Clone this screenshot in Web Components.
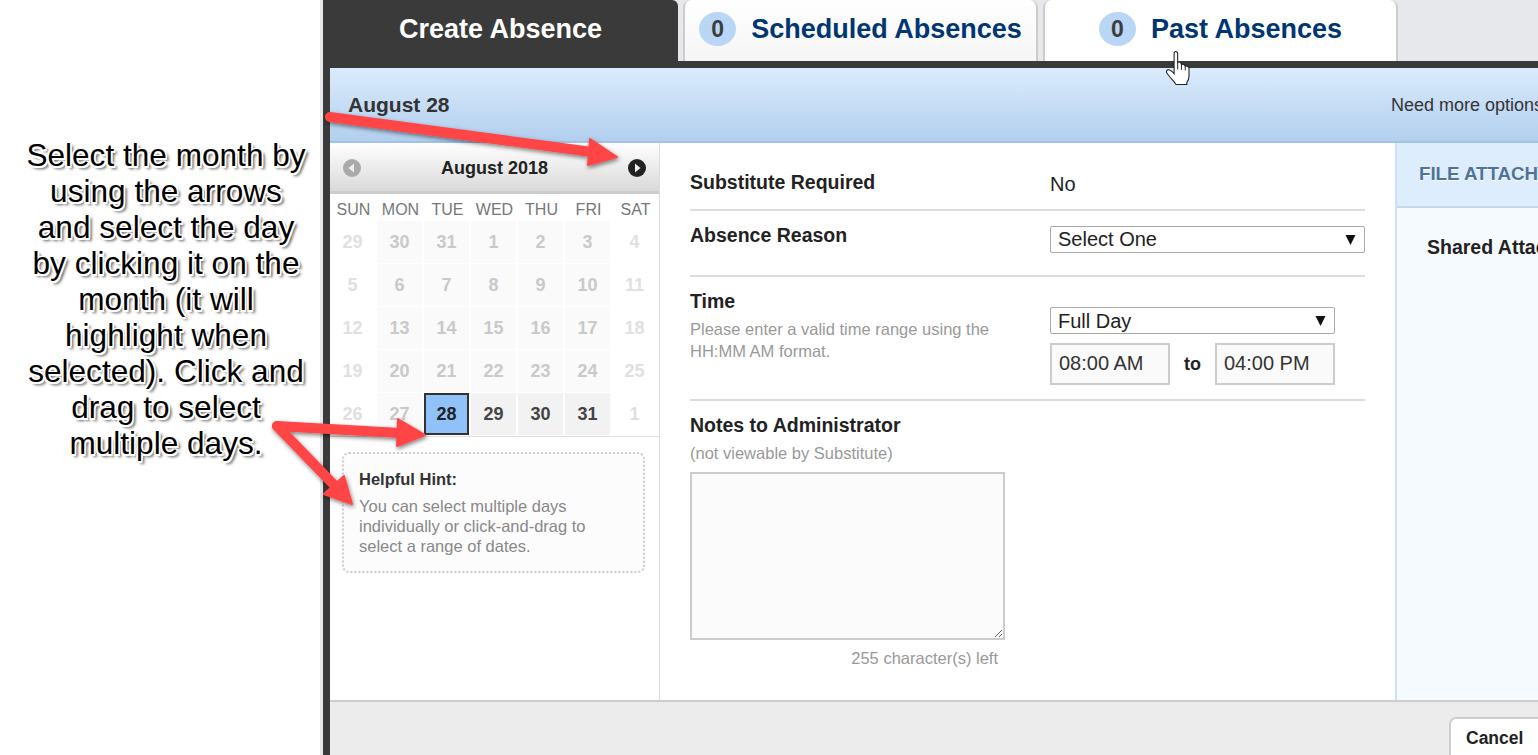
<!DOCTYPE html>
<html lang="en"><head><meta charset="utf-8"><title>Create Absence</title>
<style>
html,body{margin:0;padding:0;background:#fff;font-family:"Liberation Sans",Arial,sans-serif;}
</style></head><body>
<absence-page>
  <note-panel slot="note">Select the month by<br>using the arrows<br>and select the day<br>by clicking it on the<br>month (it will<br>highlight when<br>selected). Click and<br>drag to select<br>multiple days.</note-panel>
  <absence-tabs slot="tabs"></absence-tabs>
  <date-band slot="band"></date-band>
  <day-calendar slot="calendar"></day-calendar>
  <absence-form slot="form"></absence-form>
  <attach-panel slot="attach"></attach-panel>
  <action-bar slot="footer"></action-bar>
  <guide-arrows slot="overlay"></guide-arrows>
</absence-page>
<script>
function def(name, css, html, init){
  customElements.define(name, class extends HTMLElement{
    constructor(){super();const r=this.attachShadow({mode:'open'});r.innerHTML='<style>'+css+'</style>'+html;if(init)init(r,this);}
  });
}
def('absence-page',`
:host{display:flex;width:1538px;height:755px;overflow:hidden;position:relative;color:#222}
.left{flex:0 0 320px;height:100%}
.app{flex:1;min-width:0;display:flex;flex-direction:column;background:#e6e8ec;padding-left:3px}
.frame{flex:1;min-height:0;border-left:7px solid #3a3a3a;border-top:7px solid #3a3a3a;display:flex;flex-direction:column;background:#fff}
.body{flex:1;min-height:0;display:flex}
`,`<div class="left"><slot name="note"></slot></div>
<div class="app"><slot name="tabs"></slot>
<div class="frame"><slot name="band"></slot>
<div class="body"><slot name="calendar"></slot><slot name="form"></slot><slot name="attach"></slot></div>
<slot name="footer"></slot></div></div><slot name="overlay"></slot>`);

def('note-panel',`
:host{display:block;height:100%;box-sizing:border-box;padding-top:137px;padding-left:12px;width:320px;text-align:center;font-size:31.6px;line-height:36px;color:#000;white-space:nowrap;
text-shadow:1.5px 0 0 #fff,-1.5px 0 0 #fff,0 1.5px 0 #fff,0 -1.5px 0 #fff,1.5px 1.5px 0 #fff,-1.5px -1.5px 0 #fff,1.5px -1.5px 0 #fff,-1.5px 1.5px 0 #fff,3px 3px 3px rgba(0,0,0,.7)}
div{width:308px}
`,`<div><slot></slot></div>`);

def('tab-badge',`
:host{display:flex;align-items:center;justify-content:center;width:37px;height:34px;border-radius:50%;background:#b9d6f6;color:#3d3d3d;font-size:23px;font-weight:700}
`,`<slot></slot>`);

def('absence-tab',`
:host{display:flex;box-sizing:border-box;align-items:center;justify-content:center;gap:15px;height:61px;width:355px;font-size:27px;font-weight:700;color:#003672;background:linear-gradient(#fff,#f5f5f5);border:2px solid #ccc;border-bottom:0;border-top:0;border-top-left-radius:8px;border-top-right-radius:8px;padding-bottom:3px}
:host([active]){background:#3a3a3a;color:#fff;border:0;border-top-right-radius:6px;border-top-left-radius:0}
:host([current]){background:#fff}
`,`<slot></slot>`);

def('absence-tabs',`
:host{display:flex;height:61px;gap:5px;flex:none}
`,`<absence-tab active>Create Absence</absence-tab>
<absence-tab><tab-badge>0</tab-badge>Scheduled Absences</absence-tab>
<absence-tab current><tab-badge>0</tab-badge>Past Absences</absence-tab>`);

def('date-band',`
:host{display:flex;flex:none;box-sizing:border-box;height:75px;align-items:center;justify-content:space-between;background:linear-gradient(#dbebfd,#b2cfee);border-bottom:2px solid #a3c3e4;padding:2px 0 0 18px;color:#333}
b{font-size:21px;margin-bottom:2px}
span{width:147px;overflow:hidden;white-space:nowrap;font-size:18px}
`,`<b>August 28</b><span>Need more options?</span>`);

def('day-calendar',`
:host{display:block;flex:0 0 330px;box-sizing:border-box;border-right:1px solid #ddd;background:#fff}
.head{display:flex;align-items:center;justify-content:space-between;box-sizing:border-box;height:51px;padding:2px 12px 0 12px;border-bottom:3px solid #ccc;background:linear-gradient(#fff,#d9d9d9);font-size:18px;font-weight:700;color:#222}
svg{display:block}
.grid{display:grid;grid-template-columns:repeat(7,45px);column-gap:2px;grid-auto-rows:42px;row-gap:1px;padding-bottom:1px;border-bottom:1px solid #ddd}
.wd{display:flex;align-items:center;justify-content:center;box-sizing:border-box;height:27px;padding-top:4px;font-size:16px;color:#777}
.names{display:grid;grid-template-columns:repeat(7,47px);width:329px}
.d{display:flex;align-items:center;justify-content:center;font-size:18px;font-weight:700;box-sizing:border-box;color:#c9c9c9;background:#fafafa}
.we{background:#fff;color:#e0e0e0}
.cur{background:#f2f2f2;color:#444}
.sel{background:#90c1f9;color:#222;border:2px solid #333}
.hint{box-sizing:border-box;margin:15px 0 0 12px;width:303px;height:121px;border:2px dotted #ccc;border-radius:7px;background:#fcfcfc;padding:15px 15px;font-size:16.500px;line-height:20px;color:#888}
.hint b{display:block;color:#333;margin-bottom:7px}
`,`<div class="head">
<svg width="20" height="20" viewBox="0 0 20 20"><circle cx="10" cy="10" r="9" fill="#aaa"/><path d="M12 5.500v9L6.500 10z" fill="#eee"/></svg>
<span>August 2018</span>
<svg width="20" height="20" viewBox="0 0 20 20"><circle cx="10" cy="10" r="9" fill="#222"/><path d="M8 5.500v9l5.500-4.500z" fill="#eee"/></svg>
</div>
<div class="names" id="n"></div><div class="grid" id="g"></div>
<div class="hint"><b>Helpful Hint:</b>You can select multiple days individually or click-and-drag to select a range of dates.</div>`,
(r)=>{
 r.getElementById('n').innerHTML=['SUN','MON','TUE','WED','THU','FRI','SAT'].map(x=>`<div class="wd">${x}</div>`).join('');
 const days=[29,30,31];for(let i=1;i<=31;i++)days.push(i);days.push(1);
 r.getElementById('g').innerHTML=days.map((d,i)=>{
  let c='d';const col=i%7;
  if(col===0||col===6)c+=' we';
  if(i>=31&&i<=33)c+=' cur';
  if(i===30)c+=' sel';
  return `<div class="${c}">${d}</div>`;}).join('');
});

def('form-row',`
:host{display:flex;box-sizing:border-box;border-bottom:2px solid #ddd}
.l{flex:0 0 360px;font-size:19.500px;font-weight:700;line-height:22px;color:#222}
::slotted([slot=hint]){display:block;font-size:16.500px;font-weight:400;line-height:22px;color:#999;margin-top:6px;width:320px}
`,`<div class="l"><slot name="label"></slot><slot name="hint"></slot></div><div class="c"><slot></slot></div>`);

def('fake-select',`
:host{display:flex;align-items:center;justify-content:space-between;box-sizing:border-box;height:27px;border:1px solid #aaa;border-radius:2px;background:#fff;font-size:20px;font-weight:400;color:#222;padding:0 8px 0 7px;width:315px}
svg{display:block}
`,`<slot></slot><svg width="11" height="10" viewBox="0 0 11 10"><path d="M.5 0h10L5.500 10z" fill="#111"/></svg>`);

def('time-box',`
:host{display:flex;align-items:center;box-sizing:border-box;width:120px;height:42px;border:2px solid #ccc;background:#fafafa;font-size:20px;font-weight:400;color:#333;padding:0 0 2px 7px}
`,`<slot></slot>`);

def('absence-form',`
:host{display:block;flex:0 0 735px;box-sizing:border-box;padding:0 30px;background:#fff}
.no{font-size:20px;line-height:24px;padding-top:1px;display:block}
.to{display:flex;gap:14px;align-items:center;margin-top:9px;font-size:18px;font-weight:700}
.sub{font-size:16.500px;color:#999;line-height:22px;margin-top:6px}
textarea{display:block;box-sizing:border-box;width:315px;height:168px;margin:8px 0 0;border:2px solid #ccc;background:#fbfbfb;resize:both;padding:0;outline:0}
.count{width:308px;text-align:right;font-size:16.500px;color:#999;margin-top:9px;line-height:18px}
.r1{height:68px;padding-top:28px}
.r2{height:66px;padding-top:15px}
.r3{height:124px;padding-top:13px}
.r3 .c{padding-top:17px}
.n{padding-top:13px;font-size:19.500px;font-weight:700;line-height:22px;color:#222}
.n div,.n textarea{font-weight:400}
fake-select.s{width:285px;padding-top:1px}
form-row.r2 span{display:block;margin-top:-2px}
`,`<form-row class="r1"><span slot="label">Substitute Required</span><span class="no">No</span></form-row>
<form-row class="r2"><span slot="label">Absence Reason</span><fake-select>Select One</fake-select></form-row>
<form-row class="r3"><span slot="label">Time</span><span slot="hint">Please enter a valid time range using the HH:MM AM format.</span>
  <div class="c"><fake-select class="s">Full Day</fake-select>
  <div class="to"><time-box>08:00 AM</time-box>to<time-box>04:00 PM</time-box></div></div></form-row>
<div class="n">Notes to Administrator<div class="sub">(not viewable by Substitute)</div><textarea aria-label="Notes to Administrator"></textarea><div class="count">255 character(s) left</div></div>`);

def('attach-panel',`
:host{display:block;flex:1;min-width:0;border-left:2px solid #cfe0f0;background:#f5faff;overflow:hidden;white-space:nowrap}
.h{box-sizing:border-box;height:65px;background:#deedfd;border-bottom:2px solid #c5d9ee;padding:21px 0 0 22px;font-size:18.700px;line-height:20px;font-weight:700;color:#4f7299;text-shadow:0 1px 0 #fff}
.b{padding:28px 0 0 30px;font-size:19.500px;line-height:22px;font-weight:700;color:#222}
`,`<div class="h">FILE ATTACHMENTS</div><div class="b">Shared Attachments</div>`);

def('action-bar',`
:host{display:flex;flex:none;box-sizing:border-box;height:55px;border-top:2px solid #ccc;background:#ececec;justify-content:flex-end;overflow:hidden}
button{all:unset;box-sizing:border-box;display:block;width:89px;height:50px;margin-top:15px;background:#fff;border:2px solid #ccc;border-right:0;border-radius:7px 0 0 0;padding:0 0 8px 15px;font:700 17.500px/20px "Liberation Sans",Arial,sans-serif;color:#222}
`,`<button>Cancel</button>`);

def('guide-arrows',`
:host{position:absolute;left:0;top:0;width:1538px;height:755px;pointer-events:none}
svg{position:absolute;left:0;top:0}
`,`<svg width="1538" height="755" viewBox="0 0 1538 755">
<defs><filter id="s" x="-10%" y="-10%" width="120%" height="130%"><feDropShadow dx="1" dy="2" stdDeviation="2" flood-color="#000" flood-opacity=".5"/></filter></defs>
<g filter="url(#s)" fill="#f44" stroke="#f44" stroke-linejoin="round">
<path d="M330 117L592 152" stroke-width="10" stroke-linecap="round" fill="none"/>
<path d="M590 139L617 157 588 165z" stroke-width="2"/>
<path d="M277 426L400 433" stroke-width="10" stroke-linecap="round" fill="none"/>
<path d="M277 426L336 487" stroke-width="10" stroke-linecap="round" fill="none"/>
<path d="M398 419L425 435 397 446z" stroke-width="2"/>
<path d="M344 476L352 504 324 494z" stroke-width="2"/>
</g>
</svg>
<svg width="1538" height="755" viewBox="0 0 1538 755"><g transform="translate(1175.500 51.500) scale(1.080) translate(-1175.500 -51.500)"><path d="M1174.200 68V53.500Q1174.200 51.500 1175.800 51.500 1177.500 51.500 1177.500 53.500V61.500Q1180.500 60.500 1181 63.500 1183.500 62.500 1184.500 65 1187.500 64.500 1188 67V74Q1188 78 1186 80V82H1176Q1174 79 1171 76L1167.500 71.500Q1166.500 69 1168.500 68.500 1170.500 68 1174.200 72Z" fill="#fff" stroke="#222" stroke-width="1"/><path d="M1177.500 61.500V68M1181 63.500V68.500M1184.500 65V69" stroke="#222" stroke-width=".9" fill="none"/></g></svg>`);
</script>
</body></html>
